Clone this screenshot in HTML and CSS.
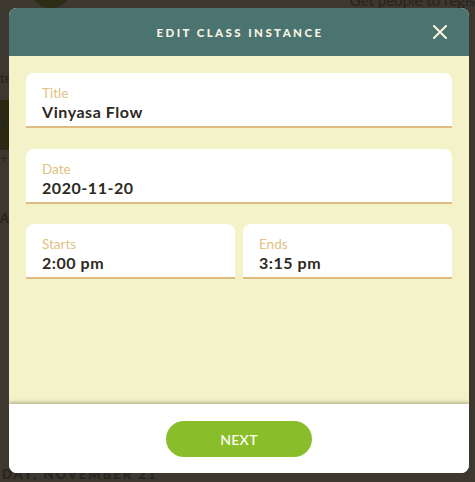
FILE: index.html
```html
<!DOCTYPE html>
<html>
<head>
<meta charset="utf-8">
<link rel="stylesheet" href="styles.css">
</head>
<body>
<div class="page">
  <div class="bg-top">
    <div class="bg-avatar"></div>
    <div class="bg-tagline">Get people to regis</div>
  </div>
  <div class="bg-left">
    <div class="bg-text">te</div>
    <div class="bg-band">TA</div>
    <div class="bg-plus">+</div>
    <div class="bg-letter">A</div>
  </div>
  <div class="bg-bottom">DAY, NOVEMBER 21</div>
</div>

<div class="modal">
  <div class="modal-header">
    <h1 class="modal-title">EDIT CLASS INSTANCE</h1>
    <button class="close" aria-label="Close">
      <svg width="14" height="14" viewBox="0 0 14 14"><path d="M1 1L13 13M13 1L1 13" stroke="#f7f3dc" stroke-width="2" stroke-linecap="square"/></svg>
    </button>
  </div>
  <div class="modal-body">
    <div class="field">
      <div class="label">Title</div>
      <div class="value">Vinyasa Flow</div>
    </div>
    <div class="field">
      <div class="label">Date</div>
      <div class="value">2020-11-20</div>
    </div>
    <div class="row">
      <div class="field">
        <div class="label">Starts</div>
        <div class="value">2:00 pm</div>
      </div>
      <div class="field">
        <div class="label">Ends</div>
        <div class="value">3:15 pm</div>
      </div>
    </div>
  </div>
  <div class="modal-footer">
    <button class="next">NEXT</button>
  </div>
</div>
</body>
</html>
```
FILE: styles.css
```css
* { box-sizing: border-box; }
html, body {
  margin: 0;
  padding: 0;
  width: 475px;
  height: 482px;
  overflow: hidden;
}
body {
  background: #3c372f;
  font-family: Lato, "Open Sans", sans-serif;
  position: relative;
}
.page {
  width: 475px;
  height: 482px;
  position: relative;
  color: #26231d;
}
.bg-top {
  display: flex;
  height: 8px;
}
.bg-avatar {
  width: 42px;
  height: 42px;
  border-radius: 50%;
  background: #2d2c14;
  margin: -34px 0 0 30px;
}
.bg-tagline {
  margin-left: auto;
  margin-right: 0;
  margin-top: -9px;
  font-size: 15px;
  white-space: nowrap;
  color: #27241e;
}
.bg-left {
  position: absolute;
  left: 0;
  top: 70px;
  width: 9px;
  overflow: hidden;
  font-size: 13px;
  color: #27241e;
}
.bg-text { height: 30px; }
.bg-band { height: 50px; background: #2a2a14; padding-top: 15px; }
.bg-plus { height: 60px; }
.bg-letter { font-weight: bold; }
.bg-bottom {
  position: absolute;
  left: 2px;
  top: 466px;
  font-size: 13px;
  font-weight: 900;
  letter-spacing: 2px;
  color: #27241e;
}

.modal {
  position: absolute;
  left: 9px;
  top: 8px;
  width: 460px;
  height: 465px;
  border-radius: 8px;
  overflow: hidden;
  display: flex;
  flex-direction: column;
  background: #ffffff;
}
.modal-header {
  height: 48px;
  background: #4b7370;
  display: flex;
  align-items: center;
  justify-content: center;
  position: relative;
}
.modal-title {
  margin: 0;
  font-size: 11.5px;
  font-weight: 900;
  letter-spacing: 2.4px;
  color: #f7f4e2;
  padding-left: 2px;
}
.close {
  position: absolute;
  right: 22px;
  top: 17px;
  width: 14px;
  height: 14px;
  padding: 0;
  border: 0;
  background: none;
  display: flex;
}
.modal-body {
  flex: 1;
  background: #f3f2c8;
  padding: 17px 17px 0;
  display: flex;
  flex-direction: column;
  gap: 21px;
}
.row {
  display: flex;
  gap: 8px;
  margin-top: -1px;
}
.row .field { flex: 1; }
.field {
  background: #ffffff;
  border-radius: 8px 8px 0 0;
  border-bottom: 2px solid #e1bc82;
  height: 55px;
  padding: 12px 16px 0;
}
.label {
  font-size: 13.5px;
  color: #e0c283;
  line-height: 16px;
}
.value {
  font-size: 16px;
  font-weight: 700;
  color: #2d291e;
  line-height: 19px;
  margin-top: 1px;
  letter-spacing: 0.55px;
}
.modal-footer {
  height: 69px;
  background: #ffffff;
  box-shadow: 0 -2px 3px rgba(90, 80, 30, 0.35);
  display: flex;
  justify-content: center;
  padding-top: 17px;
  position: relative;
}
.next {
  width: 146px;
  height: 36px;
  border: 0;
  border-radius: 18px;
  background: #8abd2a;
  color: #fbfbef;
  font-family: Lato, "Open Sans", sans-serif;
  font-size: 14px;
  font-weight: 600;
  letter-spacing: 0.3px;
}
```
